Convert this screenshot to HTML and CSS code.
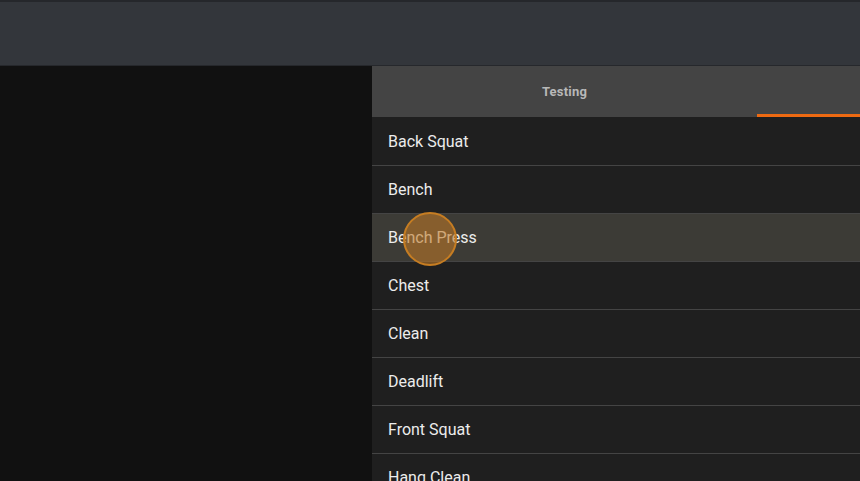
FILE: index.html
```html
<!DOCTYPE html>
<html>
<head>
<meta charset="utf-8">
<link rel="stylesheet" href="styles.css">
</head>
<body>
<div class="app">
  <header class="topbar"></header>
  <div class="main">
    <div class="left"></div>
    <div class="right">
      <div class="tabs">
        <div class="tab">Testing</div>
        <div class="tab active"></div>
      </div>
      <ul class="list">
        <li class="row">Back Squat</li>
        <li class="row">Bench</li>
        <li class="row hover">Bench Press<span class="touch"></span></li>
        <li class="row">Chest</li>
        <li class="row">Clean</li>
        <li class="row">Deadlift</li>
        <li class="row">Front Squat</li>
        <li class="row">Hang Clean</li>
      </ul>
    </div>
  </div>
</div>
</body>
</html>
```
FILE: styles.css
```css
* { box-sizing: border-box; }
html, body { margin: 0; padding: 0; height: 100%; overflow: hidden; }
body { font-family: Roboto, "Liberation Sans", sans-serif; background: #111; }
.app { display: flex; flex-direction: column; height: 481px; }
.topbar {
  height: 66px;
  flex: none;
  background: #33363b;
  border-top: 2px solid #25272b;
  border-bottom: 1px solid #26282c;
}
.main { flex: 1; display: flex; min-height: 0; }
.left { width: 372px; flex: none; background: #111111; }
.right { flex: 1; display: flex; flex-direction: column; background: #1f1f1f; }
.tabs { height: 51px; flex: none; display: flex; background: #444444; }
.tab {
  display: flex; align-items: center; justify-content: center;
  color: #b8b8b8; font-size: 13px; font-weight: 700; letter-spacing: 0.2px;
}
.tab:first-child { width: 385px; }
.tab.active { flex: 1; border-bottom: 3px solid #ee6a12; }
.list { list-style: none; margin: 0; padding: 1px 0 0; }
.row {
  position: relative;
  height: 48px;
  display: flex; align-items: center;
  padding: 0 16px 1px;
  color: #ececec; font-size: 16px;
  border-bottom: 1px solid #444;
}
.row.hover { background: #3c3b36; }
.touch {
  position: absolute;
  left: 31px; top: -2px;
  width: 54px; height: 54px;
  border-radius: 50%;
  background: rgba(190, 120, 40, 0.58);
  border: 2px solid #c67d22;
}
```
